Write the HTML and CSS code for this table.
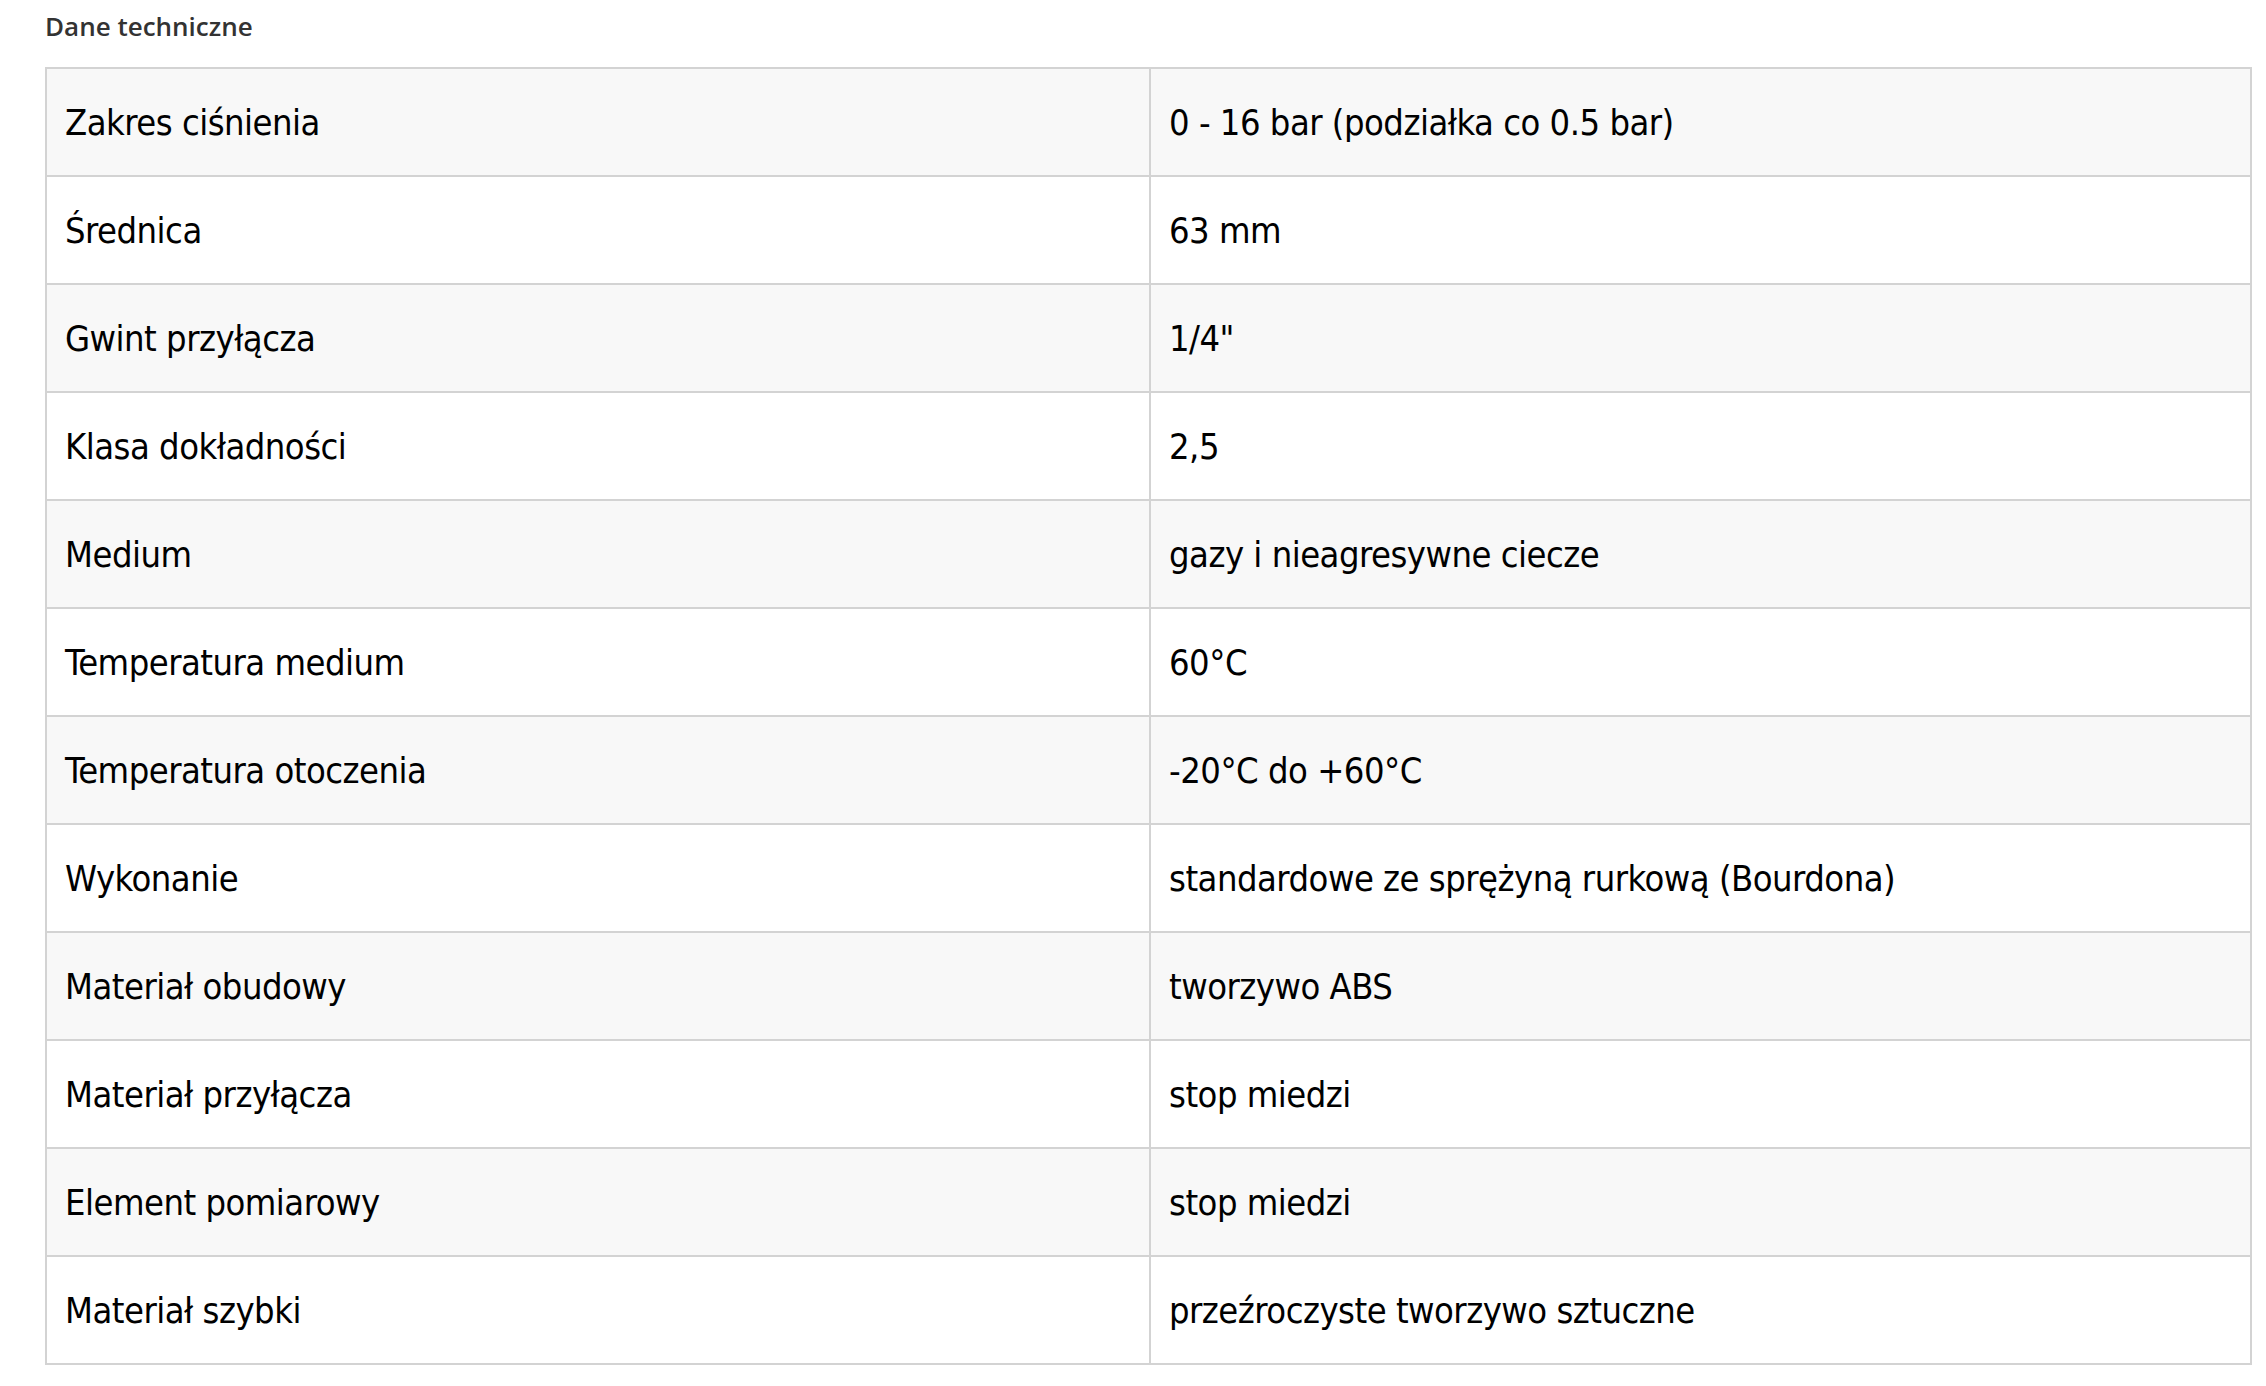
FILE: index.html
```html
<!DOCTYPE html>
<html lang="pl">
<head>
<meta charset="utf-8">
<title>Dane techniczne</title>
<link rel="stylesheet" href="styles.css">
</head>
<body>
<div class="page">
  <h2 class="title">Dane techniczne</h2>
  <table class="specs">
    <tbody>
      <tr><td>Zakres ciśnienia</td><td>0 - 16 bar (podziałka co 0.5 bar)</td></tr>
      <tr><td>Średnica</td><td>63 mm</td></tr>
      <tr><td>Gwint przyłącza</td><td>1/4"</td></tr>
      <tr><td>Klasa dokładności</td><td>2,5</td></tr>
      <tr><td>Medium</td><td>gazy i nieagresywne ciecze</td></tr>
      <tr><td>Temperatura medium</td><td>60°C</td></tr>
      <tr><td>Temperatura otoczenia</td><td>-20°C do +60°C</td></tr>
      <tr><td>Wykonanie</td><td>standardowe ze sprężyną rurkową (Bourdona)</td></tr>
      <tr><td>Materiał obudowy</td><td>tworzywo ABS</td></tr>
      <tr><td>Materiał przyłącza</td><td>stop miedzi</td></tr>
      <tr><td>Element pomiarowy</td><td>stop miedzi</td></tr>
      <tr><td>Materiał szybki</td><td>przeźroczyste tworzywo sztuczne</td></tr>
    </tbody>
  </table>
</div>
</body>
</html>
```
FILE: styles.css
```css
html, body {
  margin: 0;
  padding: 0;
  background: #ffffff;
}

.page {
  padding: 0 14px 0 45px;
}

.title {
  margin: 0;
  height: 67px;
  padding-top: 8px;
  box-sizing: border-box;
  font-family: "Open Sans", sans-serif;
  font-weight: 600;
  font-size: 26px;
  line-height: 36px;
  color: #333333;
}

.specs {
  width: 2207px;
  border-collapse: collapse;
  border: 2px solid #d3d3d3;
  font-family: "DejaVu Sans Condensed", "DejaVu Sans", sans-serif;
  font-size: 36px;
  letter-spacing: -0.5px;
  color: #000000;
}

.specs td {
  height: 108px;
  padding: 0 18px;
  border: 2px solid #d3d3d3;
  vertical-align: middle;
  box-sizing: border-box;
}

.specs td:first-child {
  width: 1104px;
}

.specs tr:nth-child(odd) td {
  background: #f8f8f8;
}
```
